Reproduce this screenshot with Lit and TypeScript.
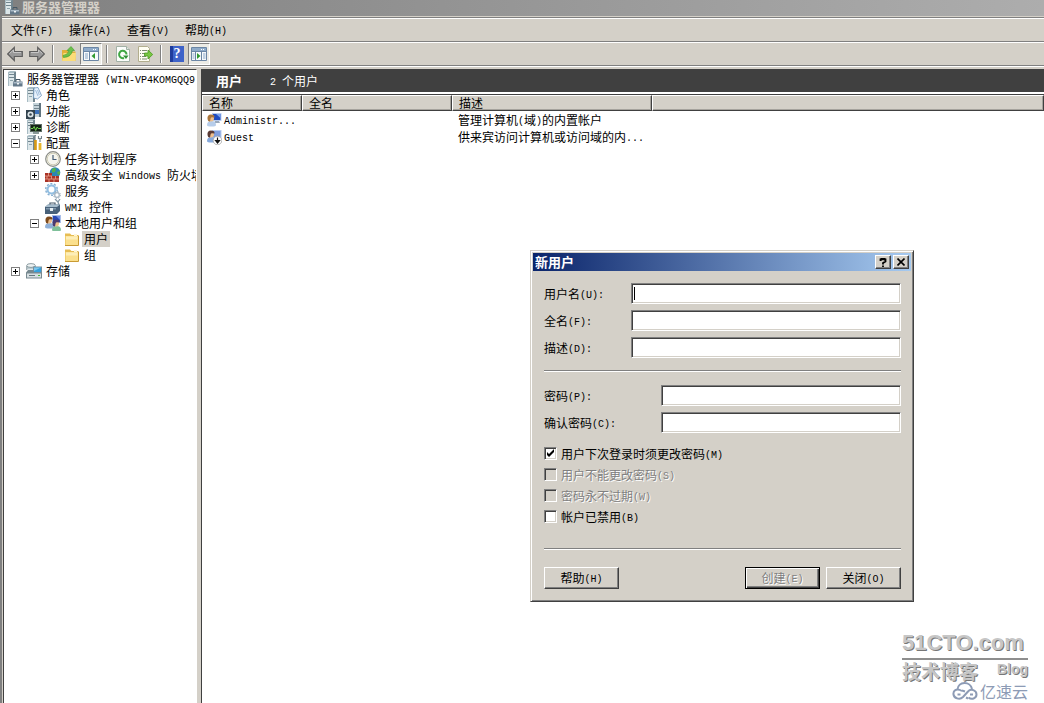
import { LitElement, html, css, svg, nothing } from "lit";
import { customElement, state } from "lit/decorators.js";

/* ---------- shared pieces ---------- */

// Latin runs are set in a half-width monospace face, two cells per Han character.
const mix = (s: string) =>
  s.split(/([\x20-\x7e]+)/).map((p) => (/^[\x20-\x7e]+$/.test(p) ? html`<span class="half">${p}</span>` : p));

const mixCss = css`
  .half {
    font-family: "Liberation Mono", monospace;
    font-size: 10px;
    line-height: 10px;
    vertical-align: 1px;
    white-space: pre;
  }
`;

const server = svg`
  <path d="M1 1l2-1h5l1 1v14H1z" fill="#a9bcc4"/>
  <path d="M2 2h5v13H2z" fill="#dce6e9"/>
  <path d="M2 3.5h5M2 6.5h5" stroke="#71858f"/>
  <path d="M7 1.5l2-1V15H7z" fill="#71858f"/>
  <path d="M3 9h3v1H3z" fill="#8fa5ae"/>`;
const person = (x: number, y: number, hair: string, shirt: string) => svg`
  <path d="M${x - 1} ${y + 10}q0-4 4.500-4t4.500 4q0 1.500-4.500 1.500t-4.500-1.500z" fill=${shirt}/>
  <circle cx=${x + 3} cy=${y + 3.5} r="3" fill="#efc08d"/>
  <path d="M${x - 0.5} ${y + 4}q-.5-4.500 3.500-4.500t3.500 3q-3-.5-3.500 0t-1 4q-2 .500-2.500-2.500z" fill=${hair}/>`;

const icons: Record<string, unknown> = {
  server: svg`${server}
    <path d="M6 10.500h9.500v5H6z" fill="#64798a"/><path d="M6.500 11h8.500v1.500H6.500z" fill="#a8b9c6"/>
    <path d="M9 10.500V8.500h4v2" fill="none" stroke="#465866"/><path d="M10 12h2v1.500h-2z" fill="#eef3f5"/>`,
  roles: svg`${server}
    <path d="M8 1l4-.5 3.500 8-4 3.500-4-1z" fill="#e7f1fb" stroke="#6d94bd" stroke-width=".8"/>
    <path d="M9.500 3l2.500 6M11.500 3l1.800 5" stroke="#8fb1d6" stroke-width=".8"/>`,
  features: svg`
    <path d="M7 0h8v14H7z" fill="#c3d2d9"/><path d="M13 0h2v14h-2z" fill="#60747f"/>
    <path d="M8 2.500h5M8 5.500h5" stroke="#71858f"/><path d="M9 7h4v4H9z" fill="#3d72bb"/>
    <path d="M0 7h9v9H0z" fill="#33434e"/><circle cx="4.500" cy="11.500" r="3" fill="#dfe7ea"/>
    <circle cx="4.500" cy="11.500" r="1.300" fill="#33434e"/>`,
  diagnose: svg`${server}
    <path d="M4 5h12v8H4z" fill="#5d6d64"/><path d="M5 6h10v6H5z" fill="#142218"/>
    <path d="M5 9.500h2l1.200-2 1.500 4 1.500-3.500 1 1.500H15" fill="none" stroke="#6fd24c"/>
    <path d="M7 13h6v2H7z" fill="#8a9a9a"/>`,
  config: svg`${server}
    <path d="M9.500 5v10" stroke="#d99a12" stroke-width="2.600"/><path d="M14 8v7" stroke="#e8b52c" stroke-width="2.800"/>
    <path d="M9 0v5M8 1.500l2-1.200M14 7V3M12.500 1v2.500h3V1" fill="none" stroke="#77868e" stroke-width="1.200"/>`,
  clock: svg`
    <circle cx="8" cy="8" r="7.300" fill="#f5f5ee" stroke="#8b8d87" stroke-width="1.200"/>
    <circle cx="8" cy="8" r="5.800" fill="none" stroke="#d0cdb6"/>
    <path d="M8 4v4.500h3.500" fill="none" stroke="#435a74" stroke-width="1.200"/>`,
  firewall: svg`
    <circle cx="10" cy="5.500" r="5.300" fill="#2b86b5"/><path d="M7 2q3-2 4 0l-1 3-3 .5zM12 5l3-1v3l-2 1z" fill="#55b04b"/>
    <path d="M0 6h7v3h7v6H0z" fill="#a93226"/>
    <path d="M0 9h7M0 12h14M3.500 6v3M2 9v3M6.500 9v3M10.500 9v3M4 12v3M9 12v3" stroke="#e29a86" stroke-width=".9"/>`,
  gears: svg`
    <circle cx="6.500" cy="6.500" r="4" fill="none" stroke="#93bfe2" stroke-width="2.200"/>
    <circle cx="6.500" cy="6.500" r="5.800" fill="none" stroke="#84aed1" stroke-width="1.400" stroke-dasharray="2 1.640"/>
    <circle cx="12" cy="12" r="2.300" fill="#fff" stroke="#a9b8c5" stroke-width="1.300"/>
    <circle cx="12" cy="12" r="3.400" fill="none" stroke="#91a5b6" stroke-dasharray="1.300 1.370"/>`,
  wmi: svg`
    <path d="M10 0l3 3M15 0l-2 3 1 3" stroke="#8296a5" stroke-width="1.300" fill="none"/>
    <path d="M5 6V4h5v2" fill="none" stroke="#455869" stroke-width="1.200"/>
    <path d="M0 8l3-2.500h12V12l-3 3H0z" fill="#48617a"/><path d="M0 8l3-2.500h12L12 8z" fill="#a6bccc"/>
    <path d="M1 9h10v1.500H1z" fill="#8199ad"/><path d="M5 9h3v3H5z" fill="#e5edf2"/>`,
  users: svg`
    <path d="M7 0h9v8H7z" fill="#a9bfe8"/><path d="M8 1h7v6H8z" fill="#2848b4"/><path d="M11 1l4 0v4z" fill="#6c8ce0"/>
    ${person(1, 2, "#7d4a1c", "#8fb0d8")}${person(8, 5, "#4a3a70", "#7fc09a")}`,
  folder: svg`
    <path d="M1 2.500h5l1.500 1.500H14v10.500H1z" fill="#e7bd53"/><path d="M1.500 5h12.500v9H1.500z" fill="#fbe08d"/>
    <path d="M2 5.500h11.500v3H2z" fill="#fdeeb8"/><path d="M1 14.500h13.500V4.500" fill="none" stroke="#c99b34"/>
    <path d="M10 3h3v2h-3z" fill="#fff6d6"/>`,
  storage: svg`
    <path d="M1 2.500h8v4H1z" fill="#bccbd0"/><ellipse cx="5" cy="2.500" rx="4.300" ry="1.900" fill="#eef3f4" stroke="#74868d" stroke-width=".8"/>
    <path d="M.7 3v4M9.300 3v2" stroke="#74868d" stroke-width=".8"/>
    <path d="M7 3.500h9v6.500H7z" fill="#78909e"/><path d="M8 4.500h7v4.500H8z" fill="#35a0dc"/><path d="M8 4.500h7L8 8z" fill="#7cc8ee"/>
    <path d="M0 9.500l2-2.500h5l1 2.500h8v6H0z" fill="#76888f"/><path d="M1 10.500h14v4H1z" fill="#d7dfe2"/>
    <path d="M3 12.500h6" stroke="#65767d"/><path d="M12 12h2v1h-2z" fill="#46b53b"/>`,
  user: svg`
    <path d="M6 1h9.500v8H6z" fill="#b9cdf0"/><path d="M7 2h7.500v6H7z" fill="#204cc0"/><path d="M10 2h4.500v4z" fill="#7aa2ec"/>
    <path d="M9 9h4l1 2H8z" fill="#9aa9bb"/>${person(2, 3, "#a9743a", "#b7cdea")}`,
  userOff: svg`
    <path d="M6 1h9.500v8H6z" fill="#b9cdf0"/><path d="M7 2h7.500v6H7z" fill="#7f9edd"/>
    ${person(2, 2, "#5a3a34", "#86a9dc")}
    <circle cx="11.500" cy="11.500" r="4.300" fill="#fff" stroke="#a5a5a5" stroke-width=".8"/>
    <path d="M11.500 8.500v5M9.500 11.500l2 2.500 2-2.500z" fill="#111" stroke="#111" stroke-width="1.200"/>`,
  back: svg`<path d="M.7 8l6.600-6.500v4h8v5H7.300v4z" fill="#999" stroke="#5f5f5f" stroke-width="1.200"/><path d="M2.500 7.500L6.500 4v2.500H14" fill="none" stroke="#c6c6c6"/>`,
  forward: svg`<path d="M15.300 8L8.700 1.500v4h-8v5h8v4z" fill="#999" stroke="#5f5f5f" stroke-width="1.200"/><path d="M2 6.500h7.500V4l4 3.500" fill="none" stroke="#c6c6c6"/>`,
  up: svg`
    <path d="M1 4h5l1 1.500h7.500V15H1z" fill="#e3b13a"/><path d="M2.500 7H15l-.5 8H1z" fill="#fbdc78"/>
    <path d="M2 9.500q5-.5 6-5H6L10 .5l3.500 4h-2Q10.500 11 2.500 11.500z" fill="#6cc04a" stroke="#3c9a2a" stroke-width=".6"/>`,
  paneLeft: svg`
    <path d="M.5 1.500h15v13H.5z" fill="#f8fafc" stroke="#6b86a5"/><path d="M1 2h14v3H1z" fill="#8fabc9"/>
    <path d="M10 3.500h1M12 3.500h1" stroke="#fff"/><path d="M6.500 5v9.500M1 5.500h14" stroke="#6b86a5"/>
    <path d="M2 8h3M2 10h3M2 12h3" stroke="#86a5c5"/><path d="M12 7v6L8.500 10z" fill="#319a30"/>`,
  paneRight: svg`
    <path d="M.5 1.500h15v13H.5z" fill="#f8fafc" stroke="#6b86a5"/><path d="M1 2h14v3H1z" fill="#8fabc9"/>
    <path d="M10 3.500h1M12 3.500h1" stroke="#fff"/><path d="M10.500 5v9.500M4.500 5v9.500M1 5.500h14" stroke="#6b86a5"/>
    <path d="M12 8h2.500M12 10h2.500M12 12h2.500M1.500 8h2M1.500 10h2M1.500 12h2" stroke="#86a5c5"/><path d="M6 7v6l3.500-3z" fill="#319a30"/>`,
  refresh: svg`
    <path d="M1.500.5h10l3 3v12h-13z" fill="#fbfdfb" stroke="#a2b1a5"/><path d="M11.500.5v3h3" fill="#e1e9e3" stroke="#a2b1a5"/>
    <path d="M11.500 8.500A3.700 3.700 0 1 0 9 12" fill="none" stroke="#3fa743" stroke-width="2"/><path d="M8 9.500h5.500L11 13z" fill="#2f9135"/>`,
  exportList: svg`
    <path d="M1.500.5h9l2 2v13h-11z" fill="#fffef2" stroke="#b2ae8e"/>
    <path d="M3 4.500h1M3 7.500h1M3 10.500h1M5 4.500h5M5 7.500h4M5 10.500h4M3 13h1M5 13h5" stroke="#7c8a70"/>
    <path d="M7.500 7h3.500V4l4.700 4.500L11 13v-3H7.500z" fill="#79c742" stroke="#4a9a20" stroke-width=".8"/>`,
};

const icon = (name: string) => svg`<svg class="icon" viewBox="0 0 16 16" aria-hidden="true">${icons[name]}</svg>`;

/* ---------- toolbar ---------- */

@customElement("tool-bar")
class ToolBar extends LitElement {
  static styles = css`
    :host { display: flex; align-items: center; height: 22px; padding: 0 2px; border-bottom: 1px solid #808080; }
    .icon { width: 16px; height: 16px; display: block; }
    .tool { width: 22px; height: 22px; padding: 0; border: 1px solid transparent; background: none; display: grid; place-items: center; }
    .pressed { border-color: #808080 #fff #fff #808080; background: #ecebe5; }
    .sep { width: 1px; height: 18px; margin: 0 4px; background: #808080; border-right: 1px solid #fff; }
    .help { width: 14px; height: 16px; background: linear-gradient(90deg, #1f3c9c 0 3px, #3e63c9 3px); color: #fff; font: bold 14px/16px "Liberation Serif", serif; text-align: center; }
  `;
  private tools = [["back", "forward"], ["up", "paneLeft"], ["refresh", "exportList"], ["help", "paneRight"]];
  private names: Record<string, string> = {
    back: "后退", forward: "前进", up: "上一级", paneLeft: "显示控制台树", refresh: "刷新", exportList: "导出列表", help: "帮助", paneRight: "显示操作窗格",
  };
  render() {
    return this.tools.map(
      (group, i) => html`${i ? html`<span class="sep"></span>` : nothing}${group.map(
        (t) => html`<button class="tool ${t.startsWith("pane") ? "pressed" : ""}" aria-label=${this.names[t]}>
          ${t === "help" ? html`<span class="help">?</span>` : icon(t)}
        </button>`
      )}`
    );
  }
}

/* ---------- console tree ---------- */

interface Node { icon: string; label: string; open?: boolean; leaf?: boolean; selected?: boolean; children?: Node[]; }

const tree: Node = {
  icon: "server", label: "服务器管理器 (WIN-VP4KOMGQQ9", children: [
    { icon: "roles", label: "角色" },
    { icon: "features", label: "功能" },
    { icon: "diagnose", label: "诊断" },
    { icon: "config", label: "配置", open: true, children: [
      { icon: "clock", label: "任务计划程序" },
      { icon: "firewall", label: "高级安全 Windows 防火墙" },
      { icon: "gears", label: "服务", leaf: true },
      { icon: "wmi", label: "WMI 控件", leaf: true },
      { icon: "users", label: "本地用户和组", open: true, children: [
        { icon: "folder", label: "用户", leaf: true, selected: true },
        { icon: "folder", label: "组", leaf: true },
      ] },
    ] },
    { icon: "storage", label: "存储" },
  ],
};

@customElement("console-tree")
class ConsoleTree extends LitElement {
  static styles = [mixCss, css`
    :host { display: block; overflow: hidden; background: #fff; padding: 1px 0 0 3px; }
    .list { list-style: none; margin: 0; padding: 0; }
    .nested { padding-left: 19px; }
    .top { padding-left: 4px; }
    .row { display: flex; align-items: center; height: 16px; white-space: nowrap; }
    .icon { width: 16px; height: 16px; flex: none; }
    .label { padding: 0 2px; margin-left: 2px; line-height: 16px; }
    .selected { background: #d4d0c8; }
    .toggle { width: 9px; height: 9px; flex: none; margin-right: 6px; padding: 0; border: 1px solid #808080; background: #fff; display: block; }
    .toggle svg { display: block; }
    .blank { width: 15px; flex: none; }
  `];
  private item(n: Node, root = false): unknown {
    return html`<li>
      <div class="row">
        ${root ? nothing : n.leaf ? html`<span class="blank"></span>` : html`
          <button class="toggle" aria-label=${n.open ? "折叠" : "展开"}>
            <svg width="7" height="7" viewBox="0 0 7 7"><path d=${n.open ? "M1 3.5h5" : "M1 3.5h5M3.5 1v5"} stroke="#000"/></svg>
          </button>`}
        ${icon(n.icon)}<span class="label ${n.selected ? "selected" : ""}">${mix(n.label)}</span>
      </div>
      ${n.children ? html`<ul class="list ${root ? "top" : "nested"}">${n.children.map((c) => this.item(c))}</ul>` : nothing}
    </li>`;
  }
  render() {
    return html`<ul class="list">${this.item(tree, true)}</ul>`;
  }
}

/* ---------- user list ---------- */

@customElement("user-list")
class UserList extends LitElement {
  static styles = [mixCss, css`
    :host { display: block; background: #fff; min-width: 0; }
    .banner { display: flex; gap: 28px; height: 22px; margin-bottom: 2px; padding-left: 14px; background: #404040; color: #fff; line-height: 22px; }
    .banner h1 { margin: 0; font-size: 13px; line-height: 22px; }
    .grid { width: 100%; table-layout: fixed; border-collapse: separate; border-spacing: 0; border-top: 1px solid #404040; text-align: left; }
    .name { width: 100px; }
    .full { width: 150px; }
    .desc { width: 200px; }
    th { box-sizing: border-box; height: 16px; padding: 0 0 0 6px; line-height: 14px; font-weight: normal; background: #d4d0c8; border: 1px solid; border-color: #fff #404040 #404040 #fff; box-shadow: inset -1px -1px #a5a29c; }
    td { height: 17px; padding: 0 0 0 6px; line-height: 16px; white-space: nowrap; overflow: hidden; }
    .who { padding-left: 4px; }
    .cell { display: flex; align-items: center; gap: 2px; }
    .icon { width: 16px; height: 16px; flex: none; }
  `];
  private rows = [
    { icon: "user", name: "Administr...", desc: "管理计算机(域)的内置帐户" },
    { icon: "userOff", name: "Guest", desc: "供来宾访问计算机或访问域的内..." },
  ];
  render() {
    return html`
      <header class="banner"><h1>用户</h1><span>${mix("2 个用户")}</span></header>
      <table class="grid">
        <thead><tr><th class="name">名称</th><th class="full">全名</th><th class="desc">描述</th><th></th></tr></thead>
        <tbody>
          ${this.rows.map((r) => html`<tr>
            <td class="who"><span class="cell">${icon(r.icon)}<span>${mix(r.name)}</span></span></td>
            <td></td><td>${mix(r.desc)}</td><td></td>
          </tr>`)}
        </tbody>
      </table>`;
  }
}

/* ---------- new user dialog ---------- */

@customElement("new-user-dialog")
class NewUserDialog extends LitElement {
  static styles = [mixCss, css`
    :host { display: block; box-sizing: border-box; background: #d4d0c8; padding: 1px; border: 1px solid; border-color: #d4d0c8 #404040 #404040 #d4d0c8; box-shadow: inset 1px 1px #fff, inset -1px -1px #808080; }
    .title { display: flex; align-items: center; gap: 2px; height: 18px; margin: 1px; padding: 0 2px; background: linear-gradient(90deg, #0a246a, #a6caf0); color: #fff; }
    .title h2 { flex: 1; margin: 0; font-size: 13px; line-height: 16px; }
    .raised { box-sizing: border-box; background: #d4d0c8; border: 1px solid; border-color: #fff #404040 #404040 #fff; box-shadow: inset -1px -1px #808080; padding: 0; font: inherit; color: #000; }
    .cap { width: 16px; height: 14px; display: grid; place-items: center; }
    .form { padding: 11px 11px 11px 12px; }
    .fields { display: grid; row-gap: 6px; }
    .field { display: grid; grid-template-columns: 87px 1fr; align-items: center; }
    .wide { grid-template-columns: 117px 1fr; }
    .box { box-sizing: border-box; width: 100%; height: 21px; min-width: 0; padding: 0 2px; background: #fff; border: 1px solid; border-color: #808080 #fff #fff #808080; box-shadow: inset 1px 1px #404040, inset -1px -1px #d4d0c8; font: inherit; outline: none; }
    .box:focus:placeholder-shown { caret-color: transparent; background: linear-gradient(#000, #000) 2px 3px / 1px 13px no-repeat #fff; }
    .rule { height: 0; margin: 12px 0 13px; border: 0; border-top: 1px solid #808080; border-bottom: 1px solid #fff; }
    .checks { margin-top: 10px; }
    .low { margin: 21px 0 17px; }
    .check { display: flex; align-items: center; gap: 4px; height: 21px; }
    .check input { appearance: none; box-sizing: border-box; width: 13px; height: 13px; margin: 0; background: #fff; border: 1px solid; border-color: #808080 #fff #fff #808080; box-shadow: inset 1px 1px #404040, inset -1px -1px #d4d0c8; }
    .check input:checked { background: #fff url("data:image/svg+xml,%3Csvg xmlns='http://www.w3.org/2000/svg' viewBox='0 0 11 11'%3E%3Cpath d='M2 4v3l2 2 5-5V1L4 6z'/%3E%3C/svg%3E"); }
    .check input:disabled { background: #d4d0c8; }
    .off, .push:disabled { color: #808080; text-shadow: 1px 1px #fff; }
    .actions { display: flex; gap: 6px; }
    .push { width: 75px; height: 22px; line-height: 18px; }
    .first { margin-right: auto; }
    .default { border-color: #000; box-shadow: inset 1px 1px #fff, inset -1px -1px #404040, inset -2px -2px #808080; }
  `];
  private field(id: string, label: string, wide = false) {
    return html`<div class="field ${wide ? "wide" : ""}">
      <label for=${id}>${mix(label)}</label>
      <input class="box" id=${id} type=${wide ? "password" : "text"} placeholder=" ">
    </div>`;
  }
  private check(label: string, on: boolean, off: boolean) {
    return html`<label class="check ${off ? "off" : ""}"><input type="checkbox" .checked=${on} ?disabled=${off}><span>${mix(label)}</span></label>`;
  }
  firstUpdated() {
    this.renderRoot.querySelector<HTMLInputElement>("#user")?.focus();
  }
  render() {
    return html`
      <header class="title">
        <h2>新用户</h2>
        <button class="raised cap" aria-label="帮助"><svg width="8" height="9" viewBox="0 0 8 9"><path d="M1.500 3V1.500h1V1h3v.5h1V3.500L4 5v1.500M4 7.500V9" fill="none" stroke="#000" stroke-width="1.800"/></svg></button>
        <button class="raised cap" aria-label="关闭"><svg width="8" height="8" viewBox="0 0 8 8"><path d="M.5.5l7 7M7.500.5l-7 7" stroke="#000" stroke-width="1.600"/></svg></button>
      </header>
      <form class="form" @submit=${(e: Event) => e.preventDefault()}>
        <div class="fields">
          ${this.field("user", "用户名(U):")}${this.field("full", "全名(F):")}${this.field("desc", "描述(D):")}
        </div>
        <hr class="rule">
        <div class="fields">${this.field("pass", "密码(P):", true)}${this.field("again", "确认密码(C):", true)}</div>
        <div class="checks">
          ${this.check("用户下次登录时须更改密码(M)", true, false)}
          ${this.check("用户不能更改密码(S)", false, true)}
          ${this.check("密码永不过期(W)", false, true)}
          ${this.check("帐户已禁用(B)", false, false)}
        </div>
        <hr class="rule low">
        <div class="actions">
          <button type="button" class="raised push first">${mix("帮助(H)")}</button>
          <button class="raised push default" disabled>${mix("创建(E)")}</button>
          <button type="button" class="raised push">${mix("关闭(O)")}</button>
        </div>
      </form>`;
  }
}

/* ---------- window ---------- */

@customElement("app-root")
class AppRoot extends LitElement {
  static styles = [mixCss, css`
    :host { display: flex; flex-direction: column; position: relative; height: 100vh; overflow: hidden; box-sizing: border-box; background: #d4d0c8; border-left: 2px solid #808080; color: #000; font: 12px/16px "Noto Sans CJK SC", sans-serif; }
    .icon { width: 16px; height: 16px; flex: none; }
    .titlebar { display: flex; align-items: center; gap: 2px; height: 14px; padding: 0 0 2px 2px; background: linear-gradient(90deg, #808080, #adadad); border-bottom: 1px solid #d4d0c8; color: #d4d0c8; font-weight: bold; font-size: 13px; }
    .menu { display: flex; height: 23px; border-top: 1px solid #808080; border-bottom: 1px solid #808080; box-shadow: inset 0 1px #fff; padding-left: 1px; }
    .menu button { padding: 0 8px; border: 0; background: none; font: inherit; line-height: 24px; }
    tool-bar { border-top: 1px solid #fff; }
    .work { flex: 1; min-height: 0; display: grid; grid-template-columns: 194px 1fr; column-gap: 4px; padding: 2px 0 0 1px; border-top: 1px solid #fff; }
    .pane { border: 1px solid; border-color: #404040 #fff #fff #404040; border-bottom: 0; }
    .list { border-right: 0; }
    .dialog { position: absolute; left: 528px; top: 250px; width: 384px; }
    .mark { position: absolute; right: 16px; bottom: 3px; width: 126px; color: #c6c6c6; text-shadow: 1px 1px #777; font-weight: bold; }
    .brand { font: bold 22px/30px "Liberation Sans", sans-serif; border-bottom: 2px solid #8e8e8e; }
    .sub { display: flex; justify-content: space-between; font-size: 19px; line-height: 22px; }
    .blog { font: bold 14px/18px "Liberation Sans", sans-serif; }
    .cloud { display: flex; justify-content: flex-end; align-items: center; gap: 2px; color: #8d9bb5; text-shadow: none; font-size: 16px; font-weight: normal; line-height: 16px; }
  `];
  @state() private menus = ["文件(F)", "操作(A)", "查看(V)", "帮助(H)"];
  render() {
    return html`
      <header class="titlebar">${icon("server")}<span>服务器管理器</span></header>
      <nav class="menu">${this.menus.map((m) => html`<button>${mix(m)}</button>`)}</nav>
      <tool-bar></tool-bar>
      <main class="work">
        <console-tree class="pane"></console-tree>
        <user-list class="pane list"></user-list>
      </main>
      <new-user-dialog class="dialog"></new-user-dialog>
      <aside class="mark">
        <div class="brand">51CTO.com</div>
        <div class="sub"><span>技术博客</span><span class="blog">Blog</span></div>
        <div class="cloud">
          <svg width="26" height="18" viewBox="0 0 26 18" fill="none" stroke="#8d9bb5" stroke-width="2">
            <path d="M5.500 7.500C6 -1 18.500 -1 20 7"/>
            <path d="M10 9C4 5.500 1 9 1.500 12.500s6 6 9.500 2.500l5-5.500c3-3.500 8.500-1 8.500 3s-5 5.500-8 3"/>
            <path d="M5.500 12.500h3M13 9.500l-3-1M14 15.500l2 1M18 12.500h3"/>
          </svg><span>亿速云</span>
        </div>
      </aside>`;
  }
}
